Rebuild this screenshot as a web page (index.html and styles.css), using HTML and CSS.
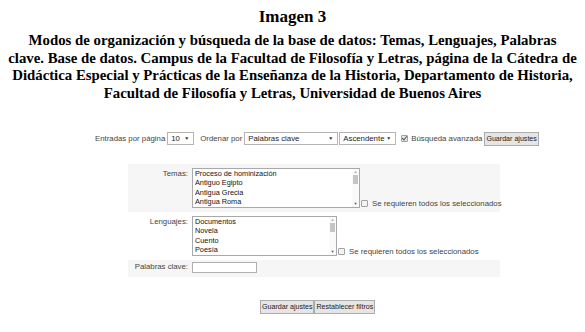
FILE: index.html
```html
<!DOCTYPE html>
<html>
<head>
  <title>Imagen 3</title>
  <link rel="stylesheet" href="styles.css">
</head>
<body>
  <div class="caption">
    <h1>Imagen 3</h1>
    <p>Modos de organización y búsqueda de la base de datos: Temas, Lenguajes, Palabras<br>
    clave. Base de datos. Campus de la Facultad de Filosofía y Letras, página de la Cátedra de<br>
    Didáctica Especial y Prácticas de la Enseñanza de la Historia, Departamento de Historia,<br>
    Facultad de Filosofía y Letras, Universidad de Buenos Aires</p>
  </div>

  <div class="toolbar">
    <span class="label">Entradas por página</span>
    <span class="dropdown dd-small">10<span class="arrow">▼</span></span>
    <span class="label ordenar">Ordenar por</span>
    <span class="dropdown dd-wide">Palabras clave<span class="arrow">▼</span></span>
    <span class="dropdown dd-order">Ascendente<span class="arrow">▼</span></span>
    <span class="check checked"></span>
    <span class="label">Búsqueda avanzada</span>
    <span class="button">Guardar ajustes</span>
  </div>

  <div class="search-form">
    <div class="row shaded">
      <div class="row-label">Temas:</div>
      <div class="listbox temas">
        <div class="options">
          <div>Proceso de hominización</div>
          <div>Antiguo Egipto</div>
          <div>Antigua Grecia</div>
          <div>Antigua Roma</div>
        </div>
        <div class="scrollbar"><span class="up">▲</span><span class="thumb"></span><span class="down">▼</span></div>
      </div>
      <span class="check"></span>
      <span class="note">Se requieren todos los seleccionados</span>
    </div>
    <div class="row">
      <div class="row-label">Lenguajes:</div>
      <div class="listbox lenguajes">
        <div class="options">
          <div>Documentos</div>
          <div>Novela</div>
          <div>Cuento</div>
          <div>Poesía</div>
        </div>
        <div class="scrollbar"><span class="up">▲</span><span class="thumb"></span><span class="down">▼</span></div>
      </div>
      <span class="check"></span>
      <span class="note">Se requieren todos los seleccionados</span>
    </div>
    <div class="row shaded short">
      <div class="row-label">Palabras clave:</div>
      <div class="textbox"></div>
    </div>
  </div>

  <div class="actions">
    <span class="button">Guardar ajustes</span><span class="button">Restablecer filtros</span>
  </div>
</body>
</html>
```

FILE: styles.css
```css
body {
  margin: 0;
  background: #fff;
  font-family: "Liberation Sans", Arial, sans-serif;
  font-size: 7.8px;
  color: #444;
}

.caption {
  text-align: center;
  font-family: "Liberation Serif", "Times New Roman", serif;
  font-weight: bold;
  color: #000;
  padding-top: 7px;
}

.caption h1 {
  margin: 0;
  font-size: 17px;
  line-height: 20px;
}

.caption p {
  margin: 5px 0 0;
  font-size: 14.8px;
  line-height: 17.7px;
}

/* top options bar */
.toolbar {
  display: flex;
  align-items: center;
  margin: 29px 0 0 95px;
  height: 14px;
  white-space: nowrap;
}

.dropdown {
  position: relative;
  display: inline-block;
  height: 11px;
  line-height: 11px;
  border: 1px solid #b5b5b5;
  background: #fff;
  color: #222;
  padding-left: 3px;
}

.dropdown .arrow {
  position: absolute;
  right: 4px;
  top: 0;
  font-size: 5px;
  color: #333;
}

.dd-small {
  width: 22px;
  margin-left: 2px;
}

.ordenar {
  margin-left: 6px;
}

.dd-wide {
  width: 89px;
  margin-left: 2px;
}

.dd-order {
  width: 52px;
  margin-left: 1px;
}

.check {
  display: inline-block;
  flex: none;
  width: 5px;
  height: 5px;
  border: 1px solid #a0a0a0;
  border-radius: 1px;
  background: #f4f4f4;
}

.toolbar .check {
  margin: 0 3px 0 5px;
}

.check.checked {
  background: #e6e6e6;
  position: relative;
}

.check.checked::after {
  content: "";
  position: absolute;
  left: 1px;
  top: -1px;
  width: 2px;
  height: 4px;
  border: solid #555;
  border-width: 0 1px 1px 0;
  transform: rotate(40deg);
}

.button {
  display: inline-block;
  height: 12px;
  line-height: 12px;
  padding: 0 1px;
  border: 1px solid #acacac;
  background: #e5e5e5;
  color: #222;
  font-size: 7.1px;
  white-space: nowrap;
}

.toolbar .button {
  margin-left: 2px;
}

/* advanced search form */
.search-form {
  margin: 18px 0 0 128px;
  width: 372px;
  white-space: nowrap;
}

.row {
  display: flex;
  align-items: flex-end;
  padding: 4px 0;
}

.row.shaded {
  background: #f6f6f6;
}

.row.short {
  align-items: center;
  padding: 2px 0 4px;
}

.row-label {
  align-self: flex-start;
  flex: none;
  width: 64px;
  padding-right: 4px;
  box-sizing: border-box;
  text-align: right;
  line-height: 10px;
  margin-top: 1px;
}

.row.short .row-label {
  align-self: center;
  margin-top: 0;
}

.listbox {
  display: flex;
  flex: none;
  height: 38px;
  border: 1px solid #a9a9a9;
  background: #fff;
  color: #111;
}

.listbox.temas {
  width: 166px;
}

.listbox.lenguajes {
  width: 143px;
}

.options {
  flex: 1;
  padding-left: 2px;
  font-size: 7.3px;
  line-height: 9.5px;
}

.scrollbar {
  width: 7px;
  display: flex;
  flex-direction: column;
  align-items: center;
  background: #fafafa;
}

.scrollbar .up,
.scrollbar .down {
  font-size: 4px;
  line-height: 6px;
  color: #aaa;
}

.scrollbar .down {
  margin-top: auto;
  color: #555;
}

.scrollbar .thumb {
  width: 5px;
  height: 9px;
  background: #c4c4c4;
}

.row .check {
  margin: 0 4px 1px 1px;
}

.note {
  line-height: 9px;
}

.textbox {
  width: 63px;
  height: 9px;
  border: 1px solid #b0b0b0;
  background: #fff;
}

.actions {
  display: flex;
  margin: 23px 0 0 260px;
}
```
